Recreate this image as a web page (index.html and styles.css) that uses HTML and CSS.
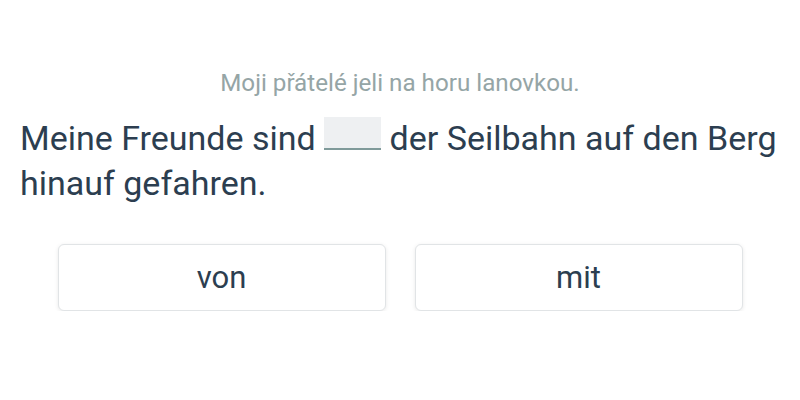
FILE: index.html
```html
<!DOCTYPE html>
<html>
<head>
<meta charset="utf-8">
<link rel="stylesheet" href="styles.css">
</head>
<body>
<div class="page">
  <p class="hint">Moji přátelé jeli na horu lanovkou.</p>
  <p class="sentence">Meine Freunde sind <span class="blank"></span> der Seilbahn auf den Berg hinauf gefahren.</p>
  <div class="choices">
    <button class="choice">von</button>
    <button class="choice">mit</button>
  </div>
</div>
</body>
</html>
```
FILE: styles.css
```css
html, body {
  margin: 0;
  padding: 0;
  background: #ffffff;
}
body {
  font-family: Roboto, "Noto Sans", sans-serif;
  color: #2c3e50;
}
.page {
  width: 800px;
  padding: 69px 20px 0;
  box-sizing: border-box;
}
.hint {
  margin: 0;
  text-align: center;
  font-size: 24.2px;
  line-height: 28px;
  color: #95a5a6;
}
.sentence {
  margin: 19px -4px 0 0;
  font-size: 34px;
  line-height: 45px;
}
.blank {
  display: inline-block;
  width: 57px;
  height: 31px;
  background: #eef0f2;
  border-bottom: 2px solid #7f9a9a;
  vertical-align: baseline;
}
.choices {
  display: grid;
  grid-template-columns: 328px 328px;
  justify-content: center;
  gap: 29px;
  margin-top: 38px;
}
.choice {
  height: 67px;
  background: #fff;
  border: 1px solid #e1e4e6;
  border-radius: 6px;
  box-shadow: 0 1px 4px rgba(0,0,0,0.09);
  font-family: Roboto, sans-serif;
  font-size: 31px;
  color: #2c3e50;
}
```
